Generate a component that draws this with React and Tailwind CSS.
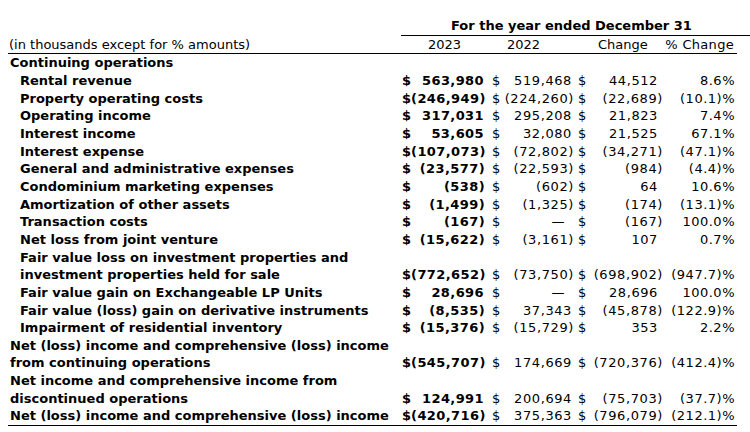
import React from "react";

// Rows of the income statement table.
const rows = [
  { label: "Rental revenue", a: "563,980", b: "519,468", c: "44,512", d: "8.6%" },
  { label: "Property operating costs", a: "(246,949)", b: "(224,260)", c: "(22,689)", d: "(10.1)%" },
  { label: "Operating income", a: "317,031", b: "295,208", c: "21,823", d: "7.4%" },
  { label: "Interest income", a: "53,605", b: "32,080", c: "21,525", d: "67.1%" },
  { label: "Interest expense", a: "(107,073)", b: "(72,802)", c: "(34,271)", d: "(47.1)%" },
  { label: "General and administrative expenses", a: "(23,577)", b: "(22,593)", c: "(984)", d: "(4.4)%" },
  { label: "Condominium marketing expenses", a: "(538)", b: "(602)", c: "64", d: "10.6%" },
  { label: "Amortization of other assets", a: "(1,499)", b: "(1,325)", c: "(174)", d: "(13.1)%" },
  { label: "Transaction costs", a: "(167)", b: "—", c: "(167)", d: "100.0%" },
  { label: "Net loss from joint venture", a: "(15,622)", b: "(3,161)", c: "107", d: "0.7%" },
  {
    label: ["Fair value loss on investment properties and", "investment properties held for sale"],
    a: "(772,652)", b: "(73,750)", c: "(698,902)", d: "(947.7)%",
  },
  { label: "Fair value gain on Exchangeable LP Units", a: "28,696", b: "—", c: "28,696", d: "100.0%" },
  { label: "Fair value (loss) gain on derivative instruments", a: "(8,535)", b: "37,343", c: "(45,878)", d: "(122.9)%" },
  { label: "Impairment of residential inventory", a: "(15,376)", b: "(15,729)", c: "353", d: "2.2%" },
];

const totals = [
  {
    label: ["Net (loss) income and comprehensive (loss) income", "from continuing operations"],
    a: "(545,707)", b: "174,669", c: "(720,376)", d: "(412.4)%",
  },
  {
    label: ["Net income and comprehensive income from", "discontinued operations"],
    a: "124,991", b: "200,694", c: "(75,703)", d: "(37.7)%",
  },
  {
    label: "Net (loss) income and comprehensive (loss) income",
    a: "(420,716)", b: "375,363", c: "(796,079)", d: "(212.1)%", last: true,
  },
];

// positive numbers sit a little left of the closing paren of negatives
function Num({ v, pos, dash }) {
  if (v === "—") return <span className={dash}>—</span>;
  return <span className={v.startsWith("(") ? "" : pos}>{v}</span>;
}

function Row({ row, indent }) {
  const lines = Array.isArray(row.label) ? row.label : [row.label];
  return (
    <div className={`flex items-end ${row.last ? "border-b border-black" : ""}`}>
      <div
        className={`w-[392px] shrink-0 whitespace-nowrap font-bold ${indent ? "pl-[12px]" : "pl-[2px]"}`}
      >
        {lines.map((l, i) => (
          <div key={i}>{l}</div>
        ))}
      </div>
      <div className="flex w-[87px] shrink-0 justify-between pl-[2px] pr-[2px] font-bold">
        <span>$</span>
        <span className="tracking-[0.4px]">
          <Num v={row.a} pos="pr-[1px]" />
        </span>
      </div>
      <div className="flex w-[89px] shrink-0 justify-between pl-[5px] pr-[2px]">
        <span>$</span>
        <span className="tracking-[0.6px]">
          <Num v={row.b} pos="pr-[2px]" dash="pr-[9px]" />
        </span>
      </div>
      <div className="flex w-[89px] shrink-0 justify-between pl-[2px] pr-[2px]">
        <span>$</span>
        <span className="tracking-[0.6px]">
          <Num v={row.c} pos="pr-[5px]" />
        </span>
      </div>
      <div className="w-[72px] shrink-0 pr-[2px] text-right tracking-[0.5px]">{row.d}</div>
    </div>
  );
}

export default function App() {
  return (
    <div className="h-[432px] w-[750px] overflow-hidden bg-white pl-[8px] pt-[17px] font-['DejaVu_Sans',Verdana,sans-serif] text-[13px] leading-[17.65px] text-black">
      <div className="ml-[393px] w-[352px] border-b border-black pl-[50px] font-bold">
        For the year ended December 31
      </div>
      <div className="flex w-[729px] border-b border-black">
        <div className="w-[392px] shrink-0 pl-[1px]">(in thousands except for % amounts)</div>
        <div className="w-[87px] shrink-0 pl-[28px]">2023</div>
        <div className="w-[89px] shrink-0 pl-[20px]">2022</div>
        <div className="w-[89px] shrink-0 pl-[22px]">Change</div>
        <div className="w-[72px] shrink-0 pr-[3px] text-right tracking-[0.3px]">% Change</div>
      </div>
      <div className="w-[729px]">
        <div className="pl-[2px] font-bold">Continuing operations</div>
        {rows.map((r, i) => (
          <Row key={i} row={r} indent />
        ))}
        {totals.map((r, i) => (
          <Row key={i} row={r} />
        ))}
      </div>
    </div>
  );
}
